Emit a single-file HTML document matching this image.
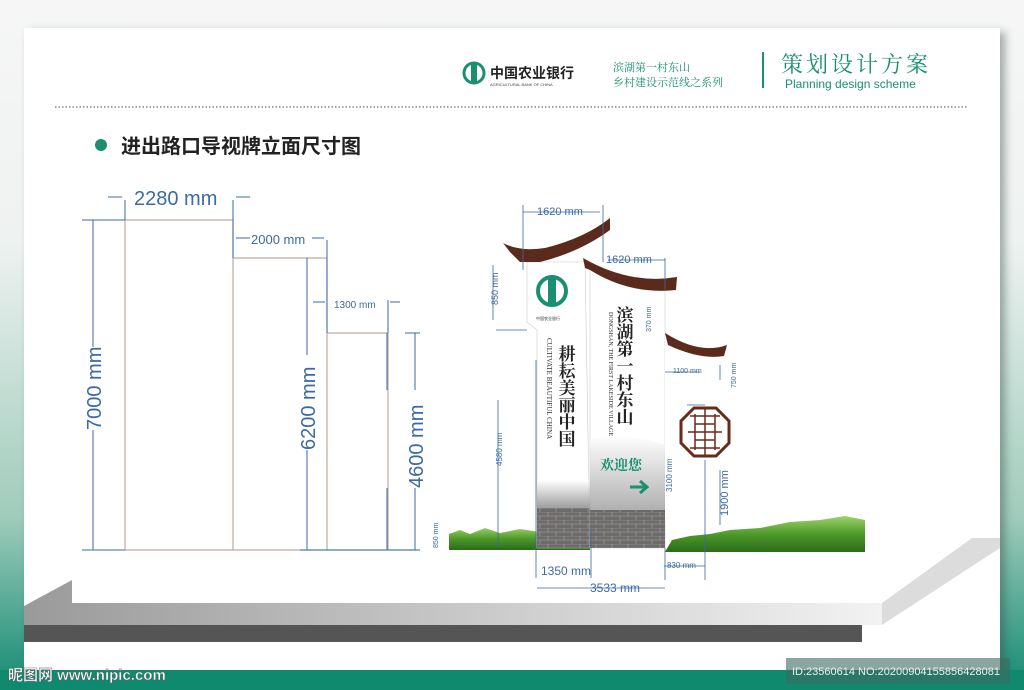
<!DOCTYPE html>
<html><head><meta charset="utf-8">
<style>
html,body{margin:0;padding:0;width:1024px;height:690px;overflow:hidden;font-family:"Liberation Sans","Noto Sans CJK SC",sans-serif;}
.bg{position:absolute;left:0;top:0;width:1024px;height:690px;background:linear-gradient(180deg,#f6f6f6 0%,#eef2f0 35%,#9fcbbb 75%,#128a72 100%);}
.card{position:absolute;left:24px;top:28px;width:976px;height:642px;background:#fff;box-shadow:5px 4px 8px rgba(60,80,70,0.45);}
.bot{position:absolute;left:0;top:670px;width:1024px;height:20px;background:#108a6f;}
svg{position:absolute;left:0;top:0;}
</style></head><body>
<div class="bg"></div>
<div class="card"></div>
<div class="bot"></div>
<svg width="1024" height="690" viewBox="0 0 1024 690" font-family="Liberation Sans, Noto Sans CJK SC, sans-serif">
<defs>
<linearGradient id="slab" x1="0" x2="1" y1="0" y2="0"><stop offset="0" stop-color="#9a9a9a"/><stop offset="0.6" stop-color="#d0d0d0"/><stop offset="1" stop-color="#f2f2f2"/></linearGradient>
<linearGradient id="grass" x1="0" x2="0" y1="0" y2="1"><stop offset="0" stop-color="#9fd36a"/><stop offset="0.5" stop-color="#4e9a2a"/><stop offset="1" stop-color="#2c6a1a"/></linearGradient>
<linearGradient id="mist" x1="0" x2="0" y1="0" y2="1"><stop offset="0" stop-color="#fff"/><stop offset="1" stop-color="#6a6a6a"/></linearGradient>
<pattern id="brick" width="16" height="8" patternUnits="userSpaceOnUse"><rect width="16" height="8" fill="#6d6a6a"/><path d="M0 0H16M0 4H16M4 0V4M12 4V8" stroke="#9a9696" stroke-width="0.8"/></pattern>
</defs>
<!-- slab (drawn first) -->
<polygon points="72,603 882,603 882,625 24,625 24,606 72,580" fill="url(#slab)"/>
<polygon points="882,603 972,538 1000,538 1000,548 882,625" fill="#dcdcdc"/>
<rect x="24" y="625" width="838" height="17" fill="#555"/>
<!-- header -->
<circle cx="474" cy="73" r="10" fill="none" stroke="#1a9070" stroke-width="3"/>
<rect x="471" y="64" width="6" height="18" fill="#1a9070"/>
<text x="490" y="78" font-size="14" font-weight="bold" fill="#222">中国农业银行</text>
<text x="490" y="86" font-size="4" fill="#444">AGRICULTURAL BANK OF CHINA</text>
<text x="613" y="71" font-size="11" fill="#1a9070" font-family="Liberation Serif, Noto Serif CJK SC, serif">滨湖第一村东山</text>
<text x="613" y="86" font-size="11" fill="#1a9070" font-family="Liberation Serif, Noto Serif CJK SC, serif">乡村建设示范线之系列</text>
<rect x="762" y="52" width="2" height="36" fill="#1a9070"/>
<text x="781" y="72" font-size="22" fill="#1a9070" letter-spacing="3" font-family="Noto Serif CJK SC, serif">策划设计方案</text>
<text x="785" y="88" font-size="12" fill="#1a9070">Planning design scheme</text>
<line x1="55" y1="107" x2="968" y2="107" stroke="#888" stroke-width="1.5" stroke-dasharray="1.5 2"/>
<circle cx="101" cy="145" r="6" fill="#1a9070"/>
<text x="121" y="153" font-size="20" font-weight="bold" fill="#222">进出路口导视牌立面尺寸图</text>
<!-- left diagram -->
<g fill="none" stroke="#bfa9a3" stroke-width="1.2">
<path d="M125 550V220H233V550M233 258H327V550M327 333H388V550M125 550H418"/>
</g>
<g stroke="#3b6aa6" stroke-width="1" fill="none">
<path d="M93 220V347M93 430V550M82 220H125M82 550H125"/>
<path d="M307 258V355M307 450V550M387 333V390M387 488V550M405 333H420M300 550H420"/>
<path d="M415 333V390M415 488V550"/>
<path d="M125 200V220M233 200V258M327 240V333M388 300V333"/>
<path d="M108 197H122M250 197H236M236 238H250M312 238H324M313 302H325M400 302H390"/>
</g>
<g fill="#3b6aa6">
<text x="134" y="205" font-size="20">2280 mm</text>
<text x="251" y="244" font-size="13">2000 mm</text>
<text x="334" y="308" font-size="10">1300 mm</text>
<text transform="translate(101,430) rotate(-90)" font-size="20">7000 mm</text>
<text transform="translate(315,450) rotate(-90)" font-size="20">6200 mm</text>
<text transform="translate(423,488) rotate(-90)" font-size="20">4600 mm</text>
</g>
<!-- grass -->
<path d="M449 550 L449 534 L460 530 L470 534 L485 528 L500 533 L520 529 L540 532 L560 527 L590 531 L590 550Z" fill="url(#grass)"/>
<path d="M665 552 L672 540 L690 536 L710 534 L730 530 L760 528 L790 522 L820 520 L845 516 L865 520 L865 552Z" fill="url(#grass)"/>
<!-- left panel -->
<path d="M527 262 L585 262 L590 548 L537 548 L537 330 L527 322Z" fill="#fff" stroke="#ccc" stroke-width="0.6"/>
<rect x="537" y="480" width="53" height="30" fill="url(#mist)" opacity="0.7"/>
<rect x="537" y="508" width="53" height="40" fill="url(#brick)"/>
<path d="M503 243 Q520 252 545 248 Q585 238 610 218 L610 230 Q580 252 540 262 L520 262 L510 252Z" fill="#5a2a1c"/>
<circle cx="552" cy="291" r="14" fill="none" stroke="#1a9070" stroke-width="4"/>
<rect x="548" y="278" width="8" height="26" fill="#1a9070"/>
<text x="536" y="320" font-size="4" fill="#333">中国农业银行</text>
<text x="567" y="345" font-size="17" font-weight="bold" fill="#222" font-family="Noto Serif CJK SC,serif" writing-mode="tb">耕耘美丽中国</text>
<text transform="translate(547,338) rotate(90)" font-size="7" fill="#333" font-family="Liberation Serif,serif">CULTIVATE BEAUTIFUL CHINA</text>
<!-- middle panel -->
<path d="M590 268 Q630 280 665 282 L665 548 L590 548Z" fill="#fff" stroke="#ccc" stroke-width="0.6"/>
<path d="M590 440 Q620 430 665 445 L665 548 L590 548Z" fill="url(#mist)" opacity="0.8"/>
<rect x="590" y="510" width="75" height="38" fill="url(#brick)"/>
<path d="M583 258 Q630 285 677 277 L676 290 Q630 295 590 270 L585 268Z" fill="#5a2a1c"/>
<text x="625" y="306" font-size="17" font-weight="bold" fill="#222" font-family="Noto Serif CJK SC,serif" writing-mode="tb">滨湖第一村东山</text>
<text transform="translate(609,312) rotate(90)" font-size="6" fill="#333" font-family="Liberation Serif,serif">DONGSHAN, THE FIRST LAKESIDE VILLAGE</text>
<text x="600" y="470" font-size="14" font-weight="bold" fill="#1a9070" font-family="Noto Serif CJK SC,serif">欢迎您</text>
<path d="M630 487H645M640 481L647 487L640 493" stroke="#1a9070" stroke-width="3" fill="none"/>
<!-- right panel -->
<path d="M665 335 Q700 350 725 350 L718 395 L705 402 L705 520 L700 520 L665 520Z" fill="#fff"/>
<path d="M665 333 Q700 355 727 345 L724 356 Q700 360 668 345Z" fill="#5a2a1c"/>
<polygon points="694,408 716,408 729,421 729,443 716,456 694,456 681,443 681,421" fill="#fff" stroke="#6a2a1a" stroke-width="3"/>
<path d="M690 416H720M690 448H720M688 432H722M695 414V450M715 414V450M705 408V456M695 424H715M695 440H715" stroke="#6a2a1a" stroke-width="1.5" fill="none"/>
<!-- right dims -->
<g stroke="#3b6aa6" fill="none" stroke-width="0.8">
<path d="M523 212H600M523 205V270M603 205V262M608 260H665M665 258V290M493 265V320M496 330H527M498 400V548M536 360V578M591 530V578M665 548V580M705 460V580M665 372H700M537 588H665M664 566H705"/>
<path d="M720 365V380M720 470V525M687 405H705"/>
</g>
<g fill="#3b6aa6">
<text x="537" y="215" font-size="11">1620 mm</text>
<text x="606" y="263" font-size="11">1620 mm</text>
<text transform="translate(498,305) rotate(-90)" font-size="9">850 mm</text>
<text transform="translate(651,332) rotate(-90)" font-size="7">370 mm</text>
<text x="673" y="373" font-size="7">1100 mm</text>
<text transform="translate(736,388) rotate(-90)" font-size="7">750 mm</text>
<text transform="translate(502,466) rotate(-90)" font-size="8">4580 mm</text>
<text transform="translate(672,492) rotate(-90)" font-size="8">3100 mm</text>
<text transform="translate(728,516) rotate(-90)" font-size="11">1900 mm</text>
<text transform="translate(438,548) rotate(-90)" font-size="7">850 mm</text>
<text x="541" y="575" font-size="12">1350 mm</text>
<text x="667" y="568" font-size="8">830 mm</text>
<text x="590" y="592" font-size="12">3533 mm</text>
</g>
<!-- watermark -->
<text x="8" y="680" font-size="15" fill="#fff" font-weight="bold" stroke="#555" stroke-width="0.4">昵图网 www.nipic.com</text>
<rect x="786" y="658" width="224" height="26" fill="#3d6b60" opacity="0.6"/>
<text x="792" y="675" font-size="11" fill="#e8f0ee">ID:23560614 NO:20200904155856428081</text>
</svg>
</body></html>
